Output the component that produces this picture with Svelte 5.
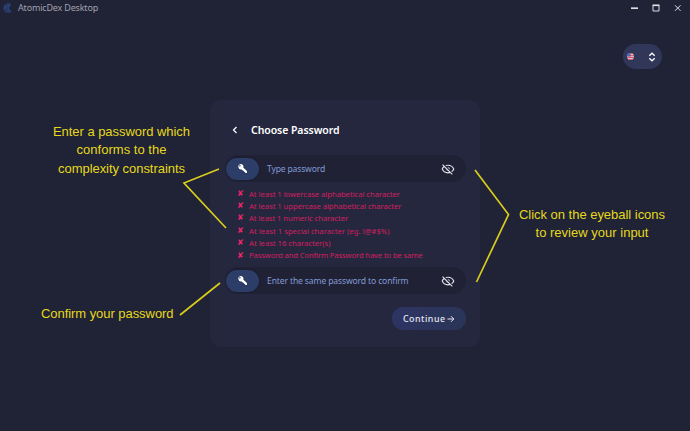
<script>
  const rules = [
    ['At least 1 lowercase alphabetical character', 151],
    ['At least 1 uppercase alphabetical character', 152.5],
    ['At least 1 numeric character', 99],
    ['At least 1 special character (eg. !@#$%)', 140.5],
    ['At least 16 character(s)', 81.5],
    ['Password and Confirm Password have to be same', 173.5]
  ];

  // Tracks a label so that it fills the given width.
  function fit(node, width) {
    const natural = node.getBoundingClientRect().width;
    node.style.letterSpacing = `${(width - natural) / node.textContent.length}px`;
  }
</script>

{#snippet key()}
  <span class="key">
    <svg width="11" height="11" viewBox="0 0 11 11">
      <path fill="#fff" fill-rule="evenodd" d="M3.7.9a2.8 2.8 0 0 1 2.6 3.7l3.6 3.5.1 1.9-1.7.1-.2-1-1-.1-.1-1-1-.2-1.3-1.3A2.8 2.8 0 1 1 3.7.9ZM2.9 2a.8.8 0 1 0 0 1.6.8.8 0 0 0 0-1.6Z" />
    </svg>
  </span>
{/snippet}

{#snippet eye()}
  <svg class="eye" width="14" height="14" viewBox="0 0 24 24">
    <path fill="#e4e5ec" d="M2 5.27 3.28 4 20 20.72 18.73 22l-3.08-3.08c-1.15.38-2.37.58-3.65.58-5 0-9.27-3.11-11-7.5.69-1.76 1.79-3.31 3.19-4.54L2 5.27M12 9a3 3 0 0 1 3 3 3 3 0 0 1-.17 1L11 9.17A3 3 0 0 1 12 9m0-4.5c5 0 9.27 3.11 11 7.5a11.79 11.79 0 0 1-4 5.19l-1.42-1.43A9.86 9.86 0 0 0 20.82 12 9.82 9.82 0 0 0 12 6.5c-1.09 0-2.16.18-3.16.5L7.3 5.47c1.44-.62 3.03-.97 4.7-.97M3.18 12A9.82 9.82 0 0 0 12 17.5c.69 0 1.37-.07 2-.21L11.72 15A3.064 3.064 0 0 1 9 12.28L5.6 8.87c-.99.85-1.82 1.91-2.42 3.13Z" />
  </svg>
{/snippet}

<div class="window">
  <header>
    <svg class="logo" width="10" height="10" viewBox="0 0 10 10" fill="none" stroke="#2b4581" stroke-width="1.2">
      <path d="M7.5 1.3 4.7.8 1.6 2.8 1 5.8l2 2.8 3.2.6 2.2-1.3M7.8 2.8 5 2.7 3 5l1.8 2.3 2.7-.4M5 2.7l.6 2.2-.8 2.4M1.6 2.8 3 5 1 5.8" />
    </svg>
    <span use:fit={80}>AtomicDex Desktop</span>
    <svg class="controls" width="58" height="12" viewBox="0 0 58 12" fill="none" stroke="#dcdce2">
      <path stroke-width="1.7" d="M3 6.2h7" />
      <path d="M25 3.5h6v5.5h-6z" />
      <path stroke-width="1.7" d="M24.5 3.3h7" />
      <path d="m47 3.3 5.5 5.5M52.500 3.3 47 8.8" />
    </svg>
  </header>

  <div class="tools">
    <div class="lang">
      <svg width="7" height="7" viewBox="0 0 8 8">
        <clipPath id="disc"><circle cx="4" cy="4" r="3.9" /></clipPath>
        <g clip-path="url(#disc)">
          <path fill="#e3c8d1" d="M0 0h8v8H0z" />
          <path stroke="#d94a5d" stroke-width="1.1" d="M0 .7h8M0 3h8M0 5.200h8M0 7.400h8" />
          <path fill="#416ab4" d="M0 0h4v4H0z" />
        </g>
      </svg>
      <svg width="8" height="10" viewBox="0 0 8 10" fill="none" stroke="#fff" stroke-width="1.3">
        <path d="M1.300 3.700 4 1.200l2.700 2.500M1.300 6.300 4 8.800l2.700-2.500" />
      </svg>
    </div>
  </div>

  <main>
    <aside class="left">
      <p class="enter">
        <span use:fit={137}>Enter a password which</span><br />
        <span use:fit={90}>conforms to the</span><br />
        <span use:fit={127}>complexity constraints</span>
      </p>
      <p class="confirm"><span use:fit={132.5}>Confirm your password</span></p>
    </aside>

    <section class="card">
      <div class="title">
        <svg width="6" height="8" viewBox="0 0 6 8" fill="none" stroke="#fff" stroke-width="1.25"><path d="M4.500 1 1.500 4l3 3" /></svg>
        <h1><span use:fit={88.5}>Choose Password</span></h1>
      </div>
      <div class="field">
        {@render key()}<span class="hint" use:fit={58}>Type password</span>{@render eye()}
      </div>
      <ul>
        {#each rules as [text, width]}
          <li><b>✘</b><span use:fit={width}>{text}</span></li>
        {/each}
      </ul>
      <div class="field">
        {@render key()}<span class="hint" use:fit={141.5}>Enter the same password to confirm</span>{@render eye()}
      </div>
      <button>
        <span use:fit={42.5}>Continue</span>
        <svg width="8" height="8" viewBox="0 0 8 8" fill="none" stroke="#e5e6ef" stroke-width="1"><path d="M.5 4h6.300M4 1.200 6.800 4 4 6.800" /></svg>
      </button>
    </section>

    <aside class="right">
      <p>
        <span use:fit={146}>Click on the eyeball icons</span><br />
        <span use:fit={113}>to review your input</span>
      </p>
    </aside>
  </main>

  <svg class="pointers" width="690" height="431" viewBox="0 0 690 431" fill="none" stroke="#d9cd1b" stroke-width="1.7">
    <path d="M219 169 184 183l42 45M180 315l40-32M475 170l33.500 44.500L476.500 282" />
  </svg>
</div>

<style>
  :global(body) { margin: 0; }
  * { box-sizing: border-box; }
  .window {
    position: relative;
    width: 690px;
    height: 431px;
    overflow: hidden;
    background: #202236;
    font-family: "Noto Sans", sans-serif;
    display: flex;
    flex-direction: column;
  }
  span { white-space: nowrap; }
  header {
    height: 16px;
    display: flex;
    align-items: center;
    padding: 0 4px 0 3px;
    color: #a0a1ac;
    font-size: 9px;
    line-height: 16px;
  }
  .logo { margin-right: 5px; }
  .controls { margin-left: auto; }
  .tools {
    height: 84px;
    display: flex;
    justify-content: flex-end;
    padding: 28px 28px 0 0;
  }
  .lang {
    width: 39px;
    height: 25px;
    border-radius: 12.5px;
    background: #303758;
    display: flex;
    align-items: center;
    justify-content: space-between;
    padding: 0 6px 0 4px;
  }
  main { display: flex; height: 247px; }
  aside {
    width: 210px;
    color: #e5d91a;
    font: 13px/18.4px "Liberation Sans", Arial, sans-serif;
  }
  p { margin: 0; }
  .enter { width: 137px; margin: 23px 0 0 53px; text-align: center; }
  .confirm { margin: 127px 0 0 41px; }
  .right p { width: 146px; margin: 106px 0 0 39px; text-align: center; }
  .enter, .right p { display: flow-root; }
  .card {
    width: 270px;
    height: 247px;
    flex: none;
    padding: 20px 14px 0 15px;
    border-radius: 11px;
    background: #25273e;
    display: flex;
    flex-direction: column;
  }
  .title {
    height: 20px;
    display: flex;
    align-items: center;
    gap: 13px;
    padding-left: 7px;
    margin-bottom: 15px;
  }
  h1 { margin: 0; font-size: 10.500px; line-height: 20px; font-weight: 600; color: #fff; }
  .field {
    height: 27px;
    border-radius: 13.5px;
    background: #202135;
    display: flex;
    align-items: center;
    padding: 0 11px 0 1px;
  }
  .key {
    width: 33px;
    height: 22px;
    border-radius: 11px;
    background: #2c3d68;
    box-shadow: 0 0 2px #191a2b;
    display: flex;
    align-items: center;
    justify-content: center;
  }
  .hint { margin-left: 8px; color: #819bd3; font-size: 8.600px; }
  .eye { margin-left: auto; }
  ul { list-style: none; margin: 5.500px 0 0 12px; padding: 0; height: 79.500px; }
  li {
    height: 12.4px;
    display: flex;
    align-items: center;
    font-size: 7.700px;
    line-height: 12.4px;
    color: #cf2060;
  }
  b { width: 12px; font: 8px/12px "DejaVu Sans", sans-serif; color: #f3246c; }
  button {
    align-self: flex-end;
    width: 74px;
    height: 23px;
    margin-top: 13px;
    border: 0;
    border-radius: 11.5px;
    padding: 0 11px;
    background: linear-gradient(100deg, #2e3463, #2a3558);
    display: flex;
    align-items: center;
    gap: 1px;
    color: #e5e6ef;
    font: 500 8.800px "Noto Sans", sans-serif;
  }
  .pointers { position: absolute; inset: 0; pointer-events: none; }
</style>
